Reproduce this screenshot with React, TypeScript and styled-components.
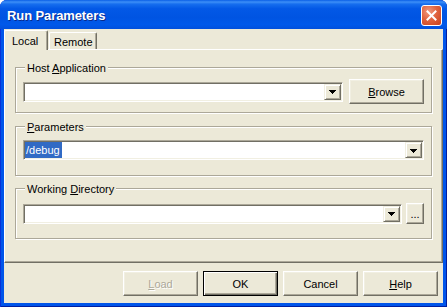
import React from "react";
import styled, { createGlobalStyle, css } from "styled-components";

const GlobalStyle = createGlobalStyle`
  html, body { margin: 0; padding: 0; background: #fff; }
  *, *::before, *::after { box-sizing: border-box; }
  body { font-family: "Liberation Sans", Arial, sans-serif; font-size: 11px; color: #000; }
`;

const Window = styled.div`
  width: 447px;
  height: 307px;
  display: flex;
  flex-direction: column;
  background: #0055ea;
  border-radius: 7px 7px 0 0;
  overflow: hidden;
  box-shadow: inset 1px 0 #0831d9, inset -1px 0 #001ea0, inset 0 -1px #001ea0;
`;

const TitleBar = styled.div`
  height: 29px;
  flex: none;
  display: flex;
  align-items: center;
  justify-content: space-between;
  padding: 2px 5px 0 7px;
  background: linear-gradient(
    to bottom,
    #0a5fe6 0%,
    #3d8ff7 7%,
    #166eee 14%,
    #0358e6 30%,
    #0054e2 60%,
    #0059ea 85%,
    #0250dc 100%
  );
`;

const Title = styled.span`
  font: bold 13px "Liberation Sans", Arial, sans-serif;
  color: #fff;
  text-shadow: 1px 1px 0 #0a2a8a;
  letter-spacing: -0.1px;
`;

const CloseButton = styled.div`
  width: 21px;
  height: 21px;
  border: 1px solid #fff;
  border-radius: 3px;
  background: radial-gradient(circle at 35% 30%, #f09a80 0%, #e0643f 45%, #c8401c 100%);
  display: flex;
  align-items: center;
  justify-content: center;
`;

const Client = styled.div`
  flex: 1;
  margin: 0 4px 4px;
  background: #ece9d8;
  display: flex;
  flex-direction: column;
`;

const TabStrip = styled.div`
  height: 20px;
  flex: none;
  display: flex;
  align-items: flex-end;
`;

const Tab = styled.div<{ $active?: boolean }>`
  position: relative;
  flex: none;
  height: ${(p) => (p.$active ? 20 : 17)}px;
  width: ${(p) => (p.$active ? 44 : 48)}px;
  margin-left: ${(p) => (p.$active ? 0 : 1)}px;
  margin-bottom: ${(p) => (p.$active ? -1 : 0)}px;
  z-index: ${(p) => (p.$active ? 1 : 0)};
  padding-left: ${(p) => (p.$active ? 7 : 4)}px;
  padding-top: ${(p) => (p.$active ? 0 : 1)}px;
  display: flex;
  align-items: center;
  background: #ece9d8;
  border-top: 1px solid #fff;
  border-left: 1px solid #fff;
  border-right: 1px solid #716f64;
  border-radius: 2px 2px 0 0;
  box-shadow: inset -1px 0 #aca899;
`;

const Panel = styled.div`
  height: 214px;
  flex: none;
  border-top: 1px solid #fff;
  border-left: 1px solid #fff;
  border-right: 1px solid #716f64;
  border-bottom: 1px solid #716f64;
  box-shadow: inset -1px -1px #aca899;
  padding: 17px 10px 0 10px;
  display: flex;
  flex-direction: column;
`;

const Group = styled.div<{ $h: number; $mt: number; $pt: number }>`
  position: relative;
  flex: none;
  height: ${(p) => p.$h}px;
  margin-top: ${(p) => p.$mt}px;
  border: 1px solid #aca899;
  box-shadow: inset 1px 1px #fff, 1px 1px #fff;
  padding: ${(p) => p.$pt}px 7px 0 7px;
`;

const Legend = styled.span`
  position: absolute;
  top: -6px;
  left: 9px;
  padding: 0 2px;
  line-height: 13px;
  background: #ece9d8;
  white-space: nowrap;
`;

const Row = styled.div<{ $gap: number }>`
  display: flex;
  align-items: center;
  gap: ${(p) => p.$gap}px;
`;

const Combo = styled.div`
  flex: 1;
  height: 20px;
  display: flex;
  padding: 1px;
  background: #fff;
  border: 1px solid;
  border-color: #aca899 #fff #fff #aca899;
  box-shadow: inset 1px 1px #716f64, inset -1px -1px #f1efe2;
`;

const ComboText = styled.div`
  flex: 1;
  display: flex;
  align-items: center;
  line-height: 16px;
`;

const Selection = styled.span`
  background: #316ac5;
  color: #fff;
  padding: 0 2px 0 1px;
  line-height: 16px;
`;

const DropButton = styled.div`
  flex: none;
  width: 17px;
  height: 16px;
  background: #ece9d8;
  border: 1px solid;
  border-color: #f1efe2 #716f64 #716f64 #f1efe2;
  box-shadow: inset 1px 1px #fff, inset -1px -1px #aca899;
  display: flex;
  align-items: center;
  justify-content: center;
  padding-top: 1px;
`;

const Button = styled.button<{ $default?: boolean; $w?: number; $h?: number }>`
  flex: none;
  width: ${(p) => p.$w ?? 75}px;
  height: ${(p) => p.$h ?? 25}px;
  margin: 0;
  padding: 0;
  font: 11px "Liberation Sans", Arial, sans-serif;
  color: #000;
  background: #ece9d8;
  border: 1px solid;
  border-color: #fff #716f64 #716f64 #fff;
  box-shadow: inset -1px -1px #aca899, inset 1px 1px #f1efe2;
  ${(p) =>
    p.$default &&
    css`
      border-color: #000;
      box-shadow: inset 1px 1px #fff, inset -1px -1px #716f64, inset -2px -2px #aca899;
    `}
  &:disabled {
    color: #aca899;
    text-shadow: 1px 1px 0 #fff;
  }
`;

const ButtonRow = styled.div`
  flex: 1;
  display: flex;
  justify-content: flex-end;
  align-items: flex-start;
  gap: 5px;
  padding: 8px 5px 0 0;
`;

const Arrow = () => (
  <svg width="7" height="4" viewBox="0 0 7 4" shapeRendering="crispEdges">
    <path d="M0 0h7v1H0z M1 1h5v1H1z M2 2h3v1H2z M3 3h1v1H3z" fill="#000" />
  </svg>
);

const CloseIcon = () => (
  <svg width="11" height="11" viewBox="0 0 11 11">
    <path d="M1.5 1.5L9.5 9.5M9.5 1.5L1.5 9.5" stroke="#fff" strokeWidth="2" strokeLinecap="square" />
  </svg>
);

export default function App() {
  return (
    <>
      <GlobalStyle />
      <Window>
        <TitleBar>
          <Title>Run Parameters</Title>
          <CloseButton>
            <CloseIcon />
          </CloseButton>
        </TitleBar>
        <Client>
          <TabStrip>
            <Tab $active>Local</Tab>
            <Tab>Remote</Tab>
          </TabStrip>
          <Panel>
            <Group $h={46} $mt={0} $pt={11}>
              <Legend>
                Host <u>A</u>pplication
              </Legend>
              <Row $gap={6}>
                <Combo>
                  <ComboText />
                  <DropButton>
                    <Arrow />
                  </DropButton>
                </Combo>
                <Button>
                  <u>B</u>rowse
                </Button>
              </Row>
            </Group>
            <Group $h={50} $mt={13} $pt={13}>
              <Legend>
                <u>P</u>arameters
              </Legend>
              <Row $gap={0}>
                <Combo>
                  <ComboText>
                    <Selection>/debug</Selection>
                  </ComboText>
                  <DropButton>
                    <Arrow />
                  </DropButton>
                </Combo>
              </Row>
            </Group>
            <Group $h={51} $mt={12} $pt={14}>
              <Legend>
                Working <u>D</u>irectory
              </Legend>
              <Row $gap={4}>
                <Combo>
                  <ComboText />
                  <DropButton>
                    <Arrow />
                  </DropButton>
                </Combo>
                <Button $w={18} $h={21}>
                  ...
                </Button>
              </Row>
            </Group>
          </Panel>
          <ButtonRow>
            <Button disabled>
              <u>L</u>oad
            </Button>
            <Button $default>OK</Button>
            <Button>Cancel</Button>
            <Button>
              <u>H</u>elp
            </Button>
          </ButtonRow>
        </Client>
      </Window>
    </>
  );
}
